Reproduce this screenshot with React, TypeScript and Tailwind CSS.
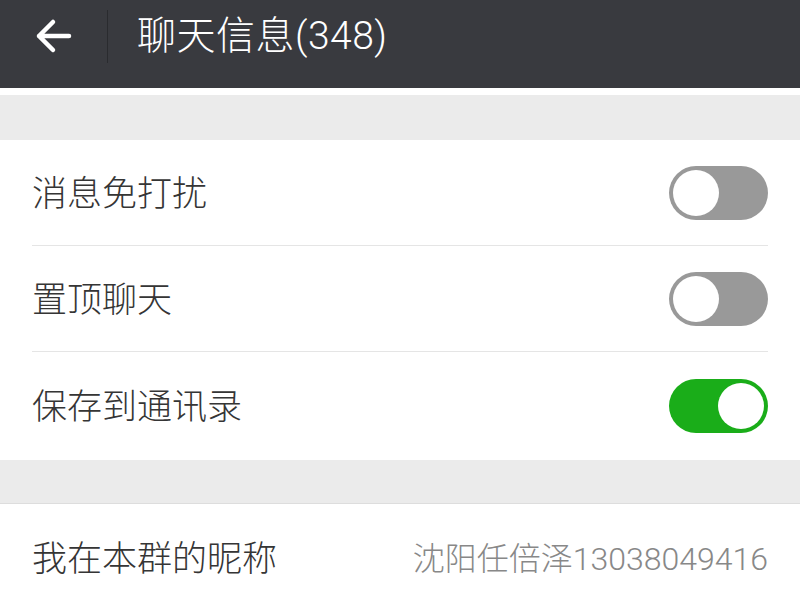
import React from "react";

const font = { fontFamily: '"Roboto", "Noto Sans CJK SC", sans-serif' };

function Toggle({ on }: { on: boolean }) {
  return on ? (
    <div className="relative w-[99px] h-[54px] rounded-full bg-[#1aad19]">
      <div className="absolute right-[4px] top-[4px] w-[46px] h-[46px] rounded-full bg-white" />
    </div>
  ) : (
    <div className="relative w-[99px] h-[54px] rounded-full bg-[#999999]">
      <div className="absolute left-[4px] top-[4px] w-[46px] h-[46px] rounded-full bg-white" />
    </div>
  );
}

function Row({ label, on, last }: { label: string; on: boolean; last?: boolean }) {
  return (
    <div className="px-[32px]">
      <div
        className={`flex items-center justify-between ${
          last ? "h-[108px]" : "h-[106px] border-b border-[#e5e5e5]"
        }`}
      >
        <span className="text-[35px] text-[#353535] font-light leading-none pt-[3px]">{label}</span>
        <Toggle on={on} />
      </div>
    </div>
  );
}

export default function App() {
  return (
    <div className="w-[800px] h-[600px] overflow-hidden bg-[#ebebeb]" style={font}>
      <div className="h-[88px] bg-[#393a3f] flex items-center pb-[16px]">
        <div className="w-[107px] flex justify-center">
          <svg width="38" height="36" viewBox="0 0 38 36">
            <path
              d="M34 18 H4 M18 4 L4 18 L18 32"
              stroke="white"
              strokeWidth="4.5"
              fill="none"
              strokeLinecap="round"
              strokeLinejoin="round"
            />
          </svg>
        </div>
        <div className="w-[1px] h-[53px] bg-[#2a2b2f]" />
        <span className="ml-[29px] text-[39px] text-white font-light leading-none tracking-[0.5px]">
          聊天信息(348)
        </span>
      </div>
      <div className="h-[7px] bg-white" />
      <div className="h-[45px]" />
      <div className="bg-white">
        <Row label="消息免打扰" on={false} />
        <Row label="置顶聊天" on={false} />
        <Row label="保存到通讯录" on={true} last />
      </div>
      <div className="h-[44px] border-b border-[#dddddd]" />
      <div className="bg-white px-[32px] h-[110px] flex items-center justify-between">
        <span className="text-[35px] text-[#353535] font-light leading-none">我在本群的昵称</span>
        <span className="text-[32px] text-[#888888] font-light leading-none">沈阳任倍泽13038049416</span>
      </div>
    </div>
  );
}
